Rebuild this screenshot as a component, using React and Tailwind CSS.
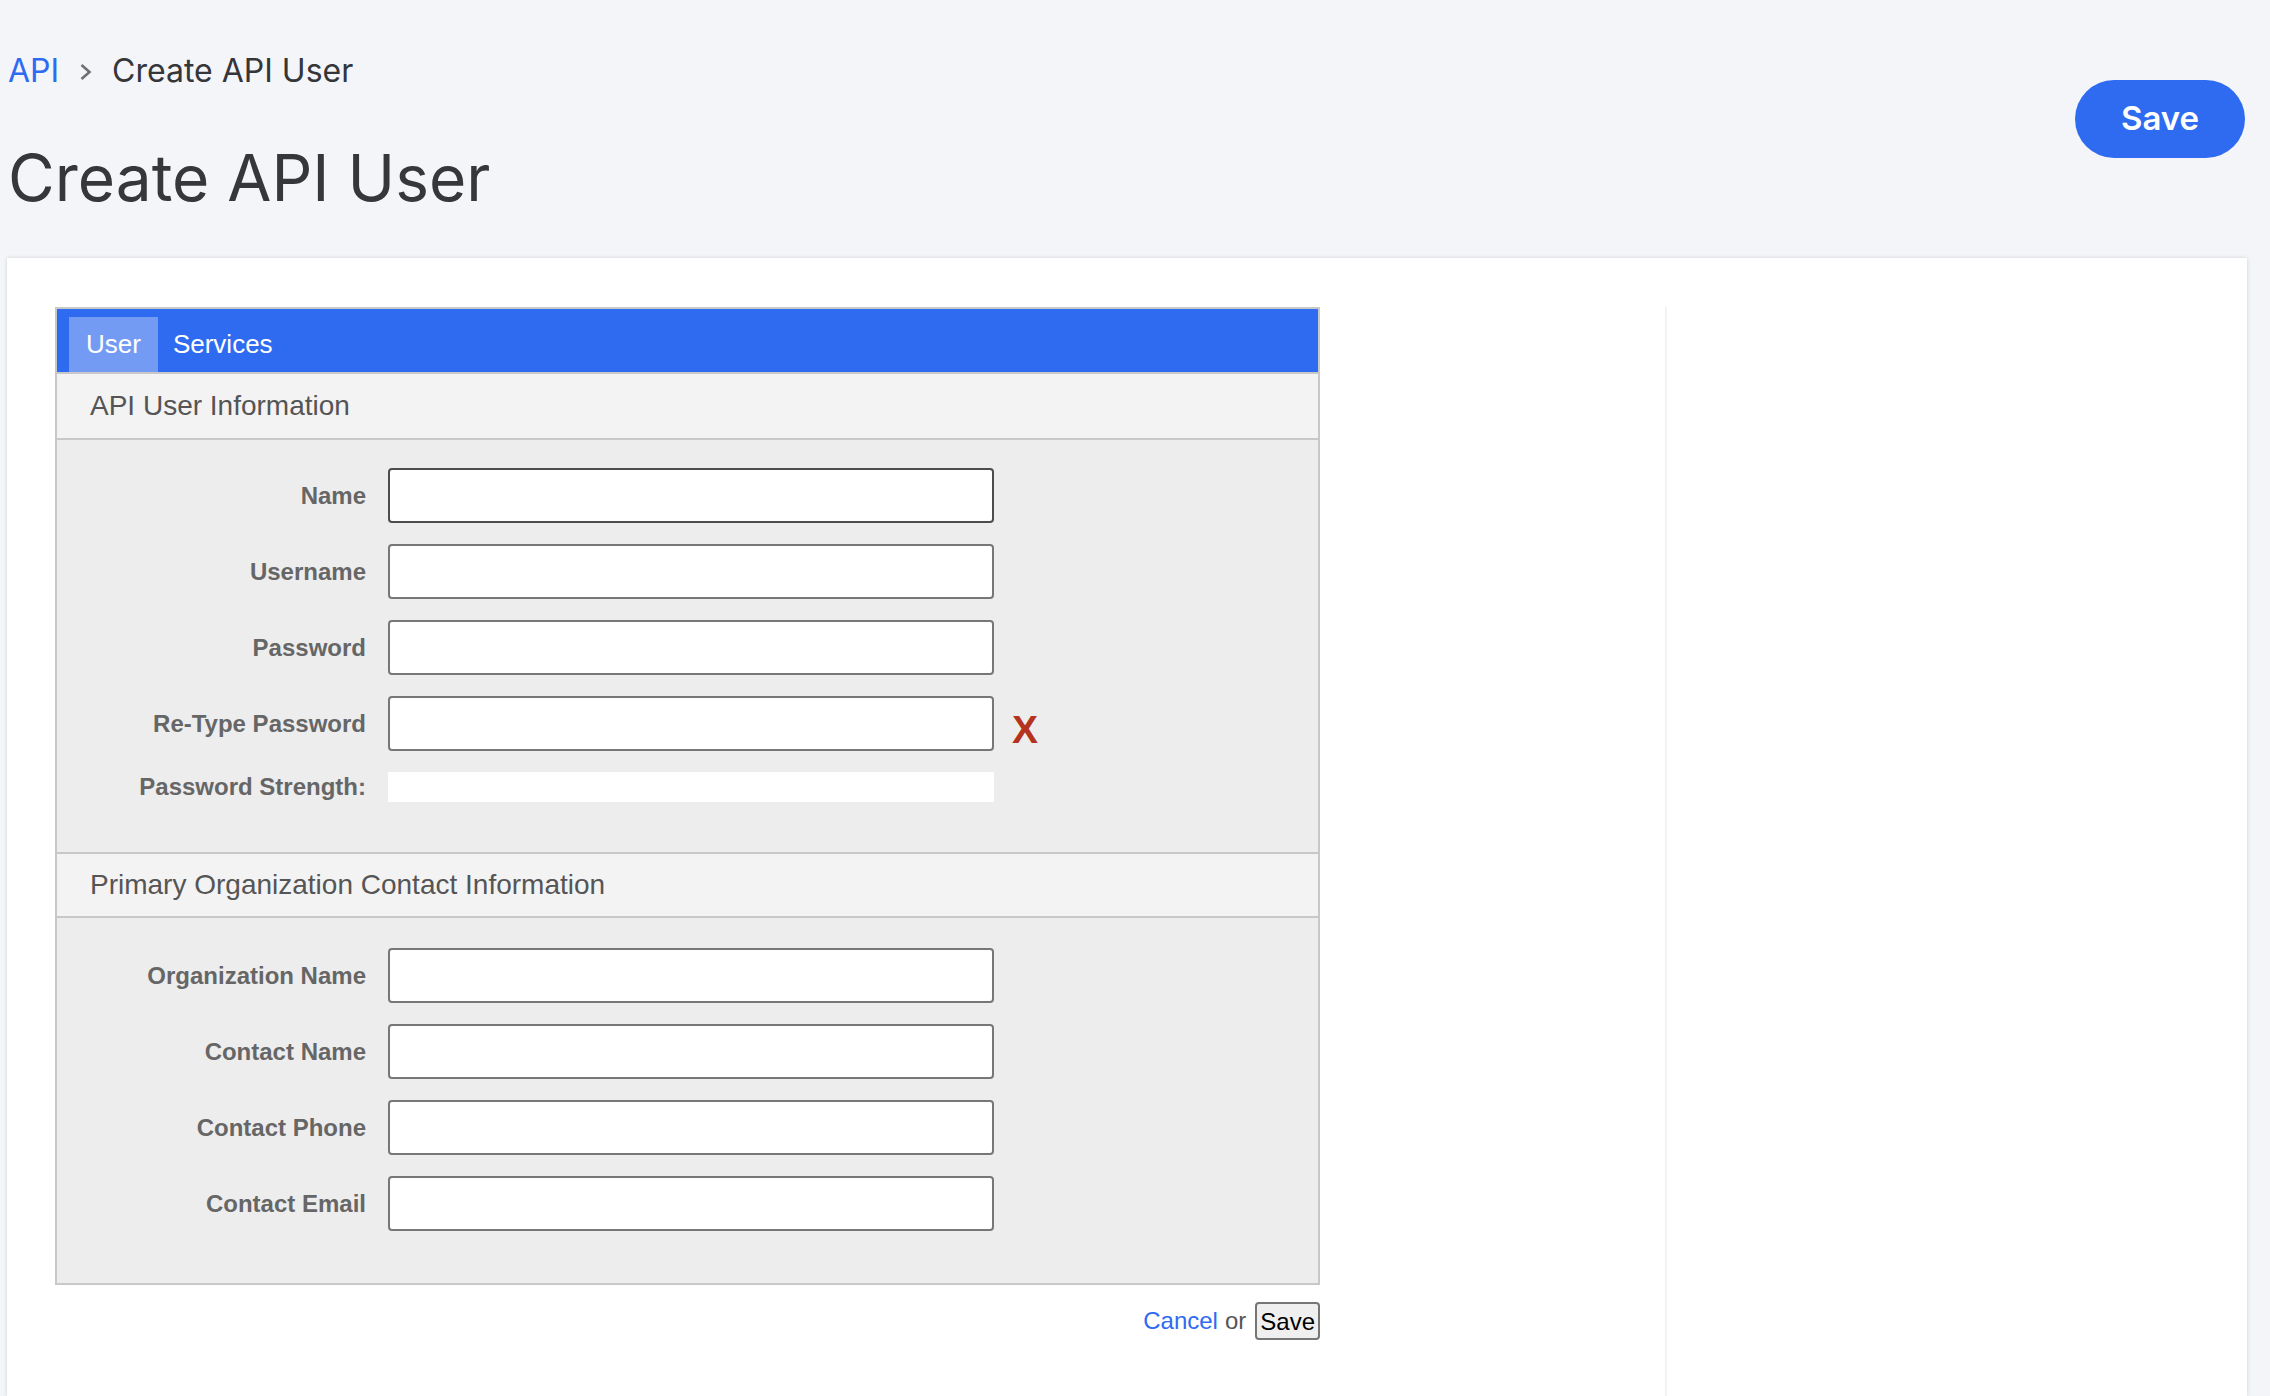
import React from "react";

const userFields = ["Name", "Username", "Password", "Re-Type Password"];
const contactFields = ["Organization Name", "Contact Name", "Contact Phone", "Contact Email"];

const SectionHeader = ({ title, topBorder }) => (
    <div
        className={`h-[66px] flex items-center pl-[33px] bg-[#f3f3f3] border-b-2 border-[#c8c8c8]
            text-[28px] text-[#555] ${topBorder ? "border-t-2" : ""}`}>
        {title}
    </div>
);

const FieldRow = ({ label, focused, children }) => (
    <div className="flex items-center">
        <label className="w-[331px] shrink-0 pr-[22px] text-right text-[24px] leading-[28px] font-bold text-[#666]">
            {label}
        </label>
        <input
            type="text"
            className={`w-[606px] h-[55px] rounded-[4px] border-2 bg-white px-2 outline-none
                ${focused ? "border-[#4d4d4d]" : "border-[#777]"}`}
        />
        {children}
    </div>
);

export default function App() {
    return (
        <div className="min-h-screen flex flex-col bg-[#f4f5f9] pl-[7px] pr-[23px] font-['Inter',sans-serif]">

            {/* ── Page header ── */}
            <div className="flex justify-between pt-[51px]">
                <div>
                    <nav className="flex items-center text-[32px] leading-[40px] text-[#35363a]">
                        <a className="text-[#2f6bf0] pl-[1px]">API</a>
                        <svg width="13" height="18" viewBox="0 0 13 18" className="mx-[20px] mt-[2px]">
                            <polyline points="2.5,2 10.5,9 2.5,16" fill="none" stroke="#6e6e73" strokeWidth="2.6" />
                        </svg>
                        <span>Create API User</span>
                    </nav>
                    <h1 className="mt-[47px] text-[64px] leading-[80px] text-[#36373b] pl-[1px]">
                        Create API User
                    </h1>
                </div>
                <button className="mt-[29px] mr-[2px] w-[170px] h-[78px] rounded-full bg-[#2f6bf0]
                    text-white text-[33px] font-semibold">
                    Save
                </button>
            </div>

            {/* ── Card ── */}
            <div className="mt-[40px] flex-1 flex bg-white shadow-[0_0_4px_rgba(0,0,0,0.15)] pt-[49px] pl-[48px]
                font-['Liberation_Sans',Arial,sans-serif]">
                <div className="w-[1610px] shrink-0">
                    <div className="w-[1265px] border-2 border-[#c8c8c8]">

                        {/* tabs */}
                        <div className="h-[65px] bg-[#2f6bf0] border-b-2 border-[#c8c8c8] flex items-end px-[12px]">
                            <div className="h-[55px] flex items-center px-[17px] bg-[#749bf4] text-white text-[26px]">
                                User
                            </div>
                            <div className="h-[55px] flex items-center pl-[15px] pr-[17px] text-white text-[26px]">
                                Services
                            </div>
                        </div>

                        <SectionHeader title="API User Information" />
                        <div className="bg-[#ededed] pt-[28px] pb-[50px] flex flex-col gap-[21px]">
                            {userFields.map((f, i) => (
                                <FieldRow key={f} label={f} focused={i === 0}>
                                    {f === "Re-Type Password" && (
                                        <span className="ml-[18px] mt-[12px] text-[39px] leading-none font-bold text-[#b5321f]">
                                            X
                                        </span>
                                    )}
                                </FieldRow>
                            ))}
                            <div className="flex items-center">
                                <span className="w-[331px] shrink-0 pr-[22px] text-right text-[24px] leading-[28px] font-bold text-[#666]">
                                    Password Strength:
                                </span>
                                <div className="w-[606px] h-[30px] bg-white" />
                            </div>
                        </div>

                        <SectionHeader title="Primary Organization Contact Information" topBorder />
                        <div className="bg-[#ededed] pt-[30px] pb-[52px] flex flex-col gap-[21px]">
                            {contactFields.map((f) => (
                                <FieldRow key={f} label={f} />
                            ))}
                        </div>
                    </div>

                    {/* ── Footer actions ── */}
                    <div className="w-[1265px] flex justify-end items-center mt-[17px] text-[24px] text-[#555]">
                        <a className="text-[#2f6bf0]">Cancel</a>
                        <span className="ml-[7px] mr-[9px]">or</span>
                        <button className="h-[38px] px-[3px] rounded-[4px] border-2 border-[#767676] bg-[#efefef] text-black">
                            Save
                        </button>
                    </div>
                </div>
                <div className="flex-1 border-l-2 border-[#f3f3f3]" />
            </div>
        </div>
    );
}
